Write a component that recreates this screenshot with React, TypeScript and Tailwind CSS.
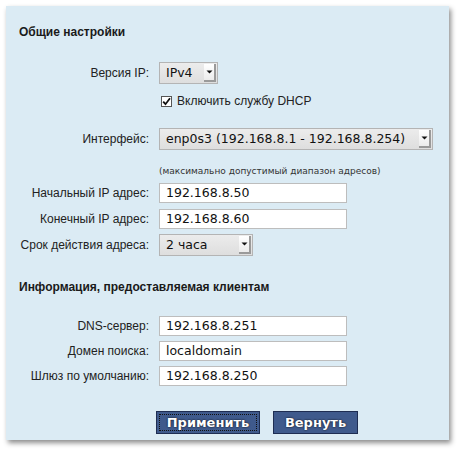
import React from "react";

const labelFont = { fontFamily: '"Liberation Sans", Arial, sans-serif' };

function Select({ value, width }: { value: string; width: string }) {
  return (
    <div
      className={`flex h-[22px] ${width} border border-[#b4b4b4] bg-gradient-to-b from-[#ececec] to-[#dedede]`}
    >
      <span className="flex-1 pl-[6px] pr-2 text-[12.5px] leading-[20px] text-[#111] font-['DejaVu_Sans',sans-serif] whitespace-nowrap">
        {value}
      </span>
      <span className="my-[1px] mr-[1px] w-[12px] flex items-center justify-center bg-gradient-to-b from-white to-[#ececec] border-r-2 border-b-2 border-[#9a9a9a]">
        <svg width="7" height="4" viewBox="0 0 7 4">
          <path d="M0.5 0.5 L6.5 0.5 L3.5 3.5 Z" fill="#111" />
        </svg>
      </span>
    </div>
  );
}

function Input({ value }: { value: string }) {
  return (
    <div className="h-[20px] w-[188px] border border-[#bdbdbd] bg-white pl-[6px] text-[12.5px] leading-[18px] text-[#111] font-['DejaVu_Sans',sans-serif]">
      {value}
    </div>
  );
}

function Row({ label, children, className = "" }: { label: string; children: React.ReactNode; className?: string }) {
  return (
    <div className={`flex items-center ${className}`}>
      <div className="w-[130px] text-right text-[12px] text-[#222]" style={labelFont}>
        {label}
      </div>
      <div className="ml-[10px]">{children}</div>
    </div>
  );
}

export default function App() {
  return (
    <div className="w-[462px] h-[455px] bg-white pt-[6px] pl-[6px]">
      <div className="w-[443px] h-[434px] bg-[#dbebf4] shadow-[2px_3px_5px_rgba(0,0,0,0.45)] pl-[13px] pt-[19px]">
        <h2 className="text-[12px] font-bold text-[#1a1a1a] leading-[14px]" style={labelFont}>
          Общие настройки
        </h2>

        <Row label="Версия IP:" className="mt-[23px]">
          <Select value="IPv4" width="w-[59px]" />
        </Row>

        <div className="ml-[142px] mt-[10px] flex items-center h-[14px]">
          <span className="w-[11px] h-[11px] border border-[#555] bg-white flex items-center justify-center">
            <svg width="9" height="9" viewBox="0 0 9 9">
              <path d="M1.2 4.6 L3.5 7.2 L8 1.2" stroke="#111" strokeWidth="1.8" fill="none" />
            </svg>
          </span>
          <span className="ml-[5px] text-[12px] text-[#222]" style={labelFont}>
            Включить службу DHCP
          </span>
        </div>

        <Row label="Интерфейс:" className="mt-[20px]">
          <Select value="enp0s3 (192.168.8.1 - 192.168.8.254)" width="w-[274px]" />
        </Row>

        <div className="ml-[140px] mt-[16px] text-[9px] leading-[11px] text-[#333] font-['DejaVu_Sans',sans-serif]">
          (максимально допустимый диапазон адресов)
        </div>

        <Row label="Начальный IP адрес:" className="mt-[6px]">
          <Input value="192.168.8.50" />
        </Row>
        <Row label="Конечный IP адрес:" className="mt-[6px]">
          <Input value="192.168.8.60" />
        </Row>
        <Row label="Срок действия адреса:" className="mt-[5px]">
          <Select value="2 часа" width="w-[94px]" />
        </Row>

        <h2 className="mt-[24px] text-[12px] font-bold text-[#1a1a1a] leading-[14px]" style={labelFont}>
          Информация, предоставляемая клиентам
        </h2>

        <Row label="DNS-сервер:" className="mt-[22px]">
          <Input value="192.168.8.251" />
        </Row>
        <Row label="Домен поиска:" className="mt-[5px]">
          <Input value="localdomain" />
        </Row>
        <Row label="Шлюз по умолчанию:" className="mt-[5px]">
          <Input value="192.168.8.250" />
        </Row>

        <div className="mt-[25px] ml-[137px] flex gap-[13px]">
          <button className="h-[23px] w-[104px] bg-[#3f5a8c] border border-[#1e2d52] text-white text-[13px] font-bold font-['DejaVu_Sans',sans-serif] [text-shadow:0_0_2px_#000] outline outline-1 outline-dotted outline-[#111] -outline-offset-[4px]">
            Применить
          </button>
          <button className="h-[23px] w-[85px] bg-[#3f5a8c] border border-[#1e2d52] text-white text-[13px] font-bold font-['DejaVu_Sans',sans-serif] [text-shadow:0_0_2px_#000]">
            Вернуть
          </button>
        </div>
      </div>
    </div>
  );
}
